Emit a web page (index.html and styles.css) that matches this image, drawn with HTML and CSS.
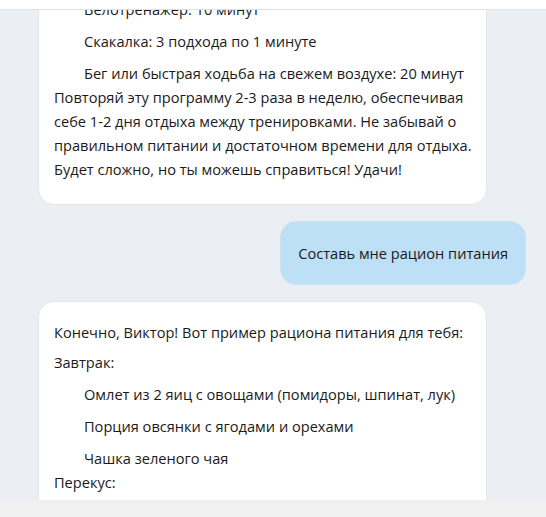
FILE: index.html
```html
<!DOCTYPE html>
<html lang="ru">
<head>
<meta charset="utf-8">
<title>Чат</title>
<link rel="stylesheet" href="styles.css">
</head>
<body>
<div class="app">
  <div class="topbar"></div>
  <div class="chat">
    <div class="feed">
      <div class="msg bot">
        <p class="item">Велотренажер: 10 минут</p>
        <p class="item">Скакалка: 3 подхода по 1 минуте</p>
        <p class="item">Бег или быстрая ходьба на свежем воздухе: 20 минут</p>
        <div class="text">Повторяй эту программу 2-3 раза в неделю, обеспечивая себе 1-2 дня отдыха между тренировками. Не забывай о правильном питании и достаточном времени для отдыха. Будет сложно, но ты можешь справиться! Удачи!</div>
      </div>
      <div class="msg user">
        <p class="para">Составь мне рацион питания</p>
      </div>
      <div class="msg bot">
        <p class="para">Конечно, Виктор! Вот пример рациона питания для тебя:</p>
        <p class="para">Завтрак:</p>
        <p class="item">Омлет из 2 яиц с овощами (помидоры, шпинат, лук)</p>
        <p class="item">Порция овсянки с ягодами и орехами</p>
        <p class="item">Чашка зеленого чая</p>
        <div class="text">Перекус:</div>
        <p class="item">Греческий йогурт с медом</p>
      </div>
    </div>
  </div>
  <div class="footer"></div>
</div>
</body>
</html>
```
FILE: styles.css
```css
html, body {
  margin: 0;
  padding: 0;
}
body {
  font-family: "Open Sans", "Noto Sans", sans-serif;
  font-size: 14.6px;
  line-height: 24px;
  color: #1a1a1a;
  background: #f0f0f0;
}
.app {
  display: flex;
  flex-direction: column;
  height: 517px;
}
.topbar {
  height: 9px;
  background: #ffffff;
  border-bottom: 1px solid #dde2e7;
  flex: none;
}
.chat {
  height: 490px;
  flex: none;
  overflow: hidden;
  background: #ebeff3;
  padding: 0 20px 0 38px;
}
.feed {
  display: flex;
  flex-direction: column;
  gap: 16px;
  margin-top: -34px;
}
.msg {
  box-sizing: border-box;
  border-radius: 16px;
}
.bot {
  width: 449px;
  background: #ffffff;
  border: 1px solid #e2e7ec;
  padding: 12px 5px 23px 15px;
}
.user {
  align-self: flex-end;
  background: #bee0f6;
  border: 1px solid #c9e3f4;
  padding: 12px 17px;
}
.para {
  margin: 6px 0;
}
.item {
  margin: 8px 0 0;
  padding-left: 30px;
}
.user .para {
  margin: 7px 0;
}
.text {
  margin: 0;
}
.footer {
  flex: 1;
  background: #f0f0f0;
}
```
